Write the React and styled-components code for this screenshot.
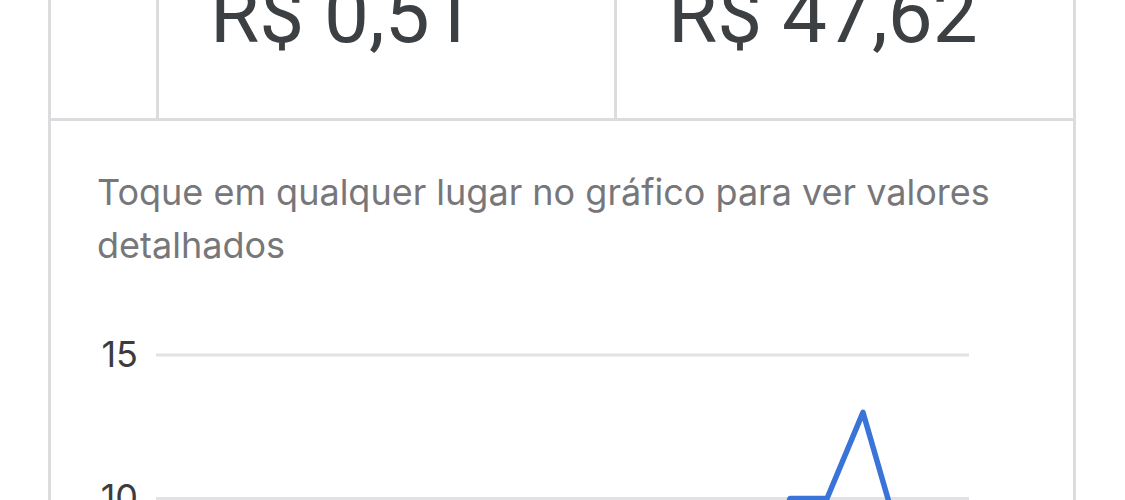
import React from "react";
import styled, { createGlobalStyle } from "styled-components";

const GlobalStyle = createGlobalStyle`
  html, body {
    margin: 0;
    padding: 0;
    background: #ffffff;
    overflow: hidden;
  }
  body {
    height: 500px;
    font-family: Inter, "Noto Sans", sans-serif;
  }
`;

const Page = styled.div`
  height: 500px;
  overflow: hidden;
  padding: 0 49px 0 48px;
`;

const Card = styled.div`
  margin-top: -85px;
  border: 3px solid #dcdcdf;
  border-bottom: none;
  background: #ffffff;
  min-height: 800px;
`;

const StatRow = styled.div`
  display: grid;
  grid-template-columns: 105px 458px 1fr;
  height: 200px;
  border-bottom: 3px solid #dcdcdf;
`;

const StatCell = styled.div`
  display: flex;
  align-items: flex-end;
  padding: 0 0 63px ${(p) => (p.$first ? 0 : 51)}px;
  border-left: ${(p) => (p.$first ? "none" : "3px solid #dcdcdf")};
`;

const StatValue = styled.div`
  font-family: Roboto, "Liberation Sans", sans-serif;
  font-size: 80px;
  line-height: 80px;
  color: #3c4043;
  white-space: nowrap;
`;

const ChartSection = styled.div`
  padding: 45px 46px 0 46px;
`;

const Hint = styled.p`
  margin: 0;
  font-family: Inter, "Noto Sans", sans-serif;
  font-size: 36px;
  line-height: 53px;
  color: #77777a;
  max-width: 920px;
`;

const ChartSvg = styled.svg`
  display: block;
  overflow: hidden;
`;

const AxisLabel = styled.text`
  font-family: Inter, "Noto Sans", sans-serif;
  font-size: 36px;
  fill: #3c3c3f;
`;

const gridY = (v) => 226.5 - (v - 10) * 28.7;

const points = [
  [656.5, 6],
  [693, 10],
  [730, 10],
  [766, 13],
  [802.5, 8.6],
  [839, 7],
];

export default function App() {
  const d = points
    .map(([x, v], i) => `${i === 0 ? "M" : "L"}${x} ${gridY(v).toFixed(1)}`)
    .join(" ");
  return (
    <>
      <GlobalStyle />
      <Page>
        <Card>
          <StatRow>
            <StatCell $first />
            <StatCell>
              <StatValue>R$ 0,51</StatValue>
            </StatCell>
            <StatCell>
              <StatValue>R$ 47,62</StatValue>
            </StatCell>
          </StatRow>
          <ChartSection>
            <Hint>Toque em qualquer lugar no gráfico para ver valores detalhados</Hint>
            <ChartSvg width="930" height="400" viewBox="0 0 930 400">
              <line x1="59" x2="872" y1={gridY(15)} y2={gridY(15)} stroke="#e2e2e4" strokeWidth="3" />
              <line x1="59" x2="872" y1={gridY(10)} y2={gridY(10)} stroke="#e2e2e4" strokeWidth="3" />
              <AxisLabel x="41" y="95" textAnchor="end">15</AxisLabel>
              <AxisLabel x="41" y="238" textAnchor="end">10</AxisLabel>
              <path d={d} fill="none" stroke="#3a74d9" strokeWidth="5.5" strokeLinejoin="round" strokeLinecap="round" />
            </ChartSvg>
          </ChartSection>
        </Card>
      </Page>
    </>
  );
}
